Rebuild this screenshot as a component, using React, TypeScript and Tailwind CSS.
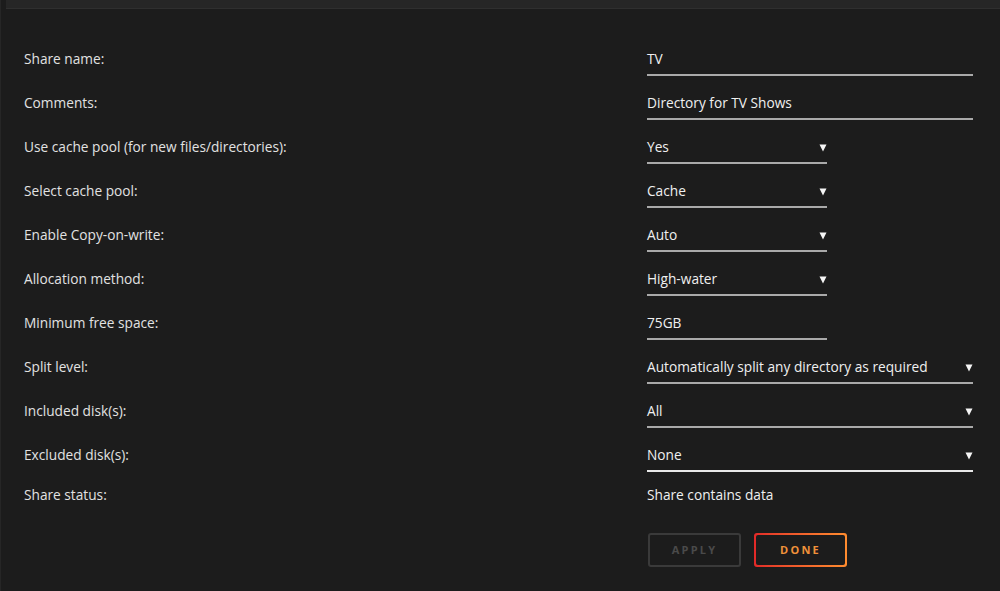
import React from 'react';

type Field = {
  label: string;
  value: string;
  kind: 'text' | 'select';
  wide: boolean;
  bright?: boolean;
};

const fields: Field[] = [
  { label: 'Share name:', value: 'TV', kind: 'text', wide: true },
  { label: 'Comments:', value: 'Directory for TV Shows', kind: 'text', wide: true },
  { label: 'Use cache pool (for new files/directories):', value: 'Yes', kind: 'select', wide: false },
  { label: 'Select cache pool:', value: 'Cache', kind: 'select', wide: false },
  { label: 'Enable Copy-on-write:', value: 'Auto', kind: 'select', wide: false },
  { label: 'Allocation method:', value: 'High-water', kind: 'select', wide: false },
  { label: 'Minimum free space:', value: '75GB', kind: 'text', wide: false },
  { label: 'Split level:', value: 'Automatically split any directory as required', kind: 'select', wide: true },
  { label: 'Included disk(s):', value: 'All', kind: 'select', wide: true },
  { label: 'Excluded disk(s):', value: 'None', kind: 'select', wide: true, bright: true },
];

function Caret() {
  return (
    <svg width="8" height="9" viewBox="0 0 8 9" className="shrink-0">
      <path d="M0.5 1.5 H7.5 L4 8.5 Z" fill="#f5f5f5" />
    </svg>
  );
}

export default function App() {
  return (
    <div
      className="w-[1000px] h-[591px] bg-[#1c1c1c] text-[13.7px] text-[#e4e4e4] overflow-hidden flex"
      style={{ fontFamily: '"Open Sans", "Liberation Sans", sans-serif' }}
    >
      <div className="w-[6px] border-l border-[#262626] bg-[#1c1c1c]" />
      <div className="flex-1 flex flex-col">
        <div className="h-[9px] bg-[#262626] border-b border-[#2f2f2f]" />
        <div className="pl-[18px] pt-[28px] flex flex-col">
          {fields.map((f) => (
            <div key={f.label} className="h-11 flex items-center">
              <div className="w-[623px] text-[#e2e2e2]">{f.label}</div>
              <div
                className={`h-[33px] pt-[2px] flex items-center justify-between border-b-2 ${
                  f.wide ? 'w-[326px]' : 'w-[180px]'
                } ${f.bright ? 'border-[#e8e8e8]' : 'border-[#a9a9a9]'}`}
              >
                <span className="text-[#f0f0f0]">{f.value}</span>
                {f.kind === 'select' && <Caret />}
              </div>
            </div>
          ))}
          <div className="h-[36px] flex items-center">
            <div className="w-[623px] text-[#e2e2e2]">Share status:</div>
            <div className="text-[#f0f0f0]">Share contains data</div>
          </div>
          <div className="flex gap-[13px] pl-[624px] mt-[20px]">
            <button className="w-[93px] h-[34px] rounded-[3px] border-2 border-[#3a3a3a] text-[11px] font-bold tracking-[0.2em] text-[#4a4a4a]">
              APPLY
            </button>
            <button className="w-[93px] h-[34px] rounded-[3px] p-[2px] bg-gradient-to-r from-[#e22828] to-[#ff8c2f]">
              <span className="w-full h-full rounded-[2px] bg-[#1c1c1c] flex items-center justify-center text-[11px] font-bold tracking-[0.2em] text-[#f0913a]">
                DONE
              </span>
            </button>
          </div>
        </div>
      </div>
    </div>
  );
}
